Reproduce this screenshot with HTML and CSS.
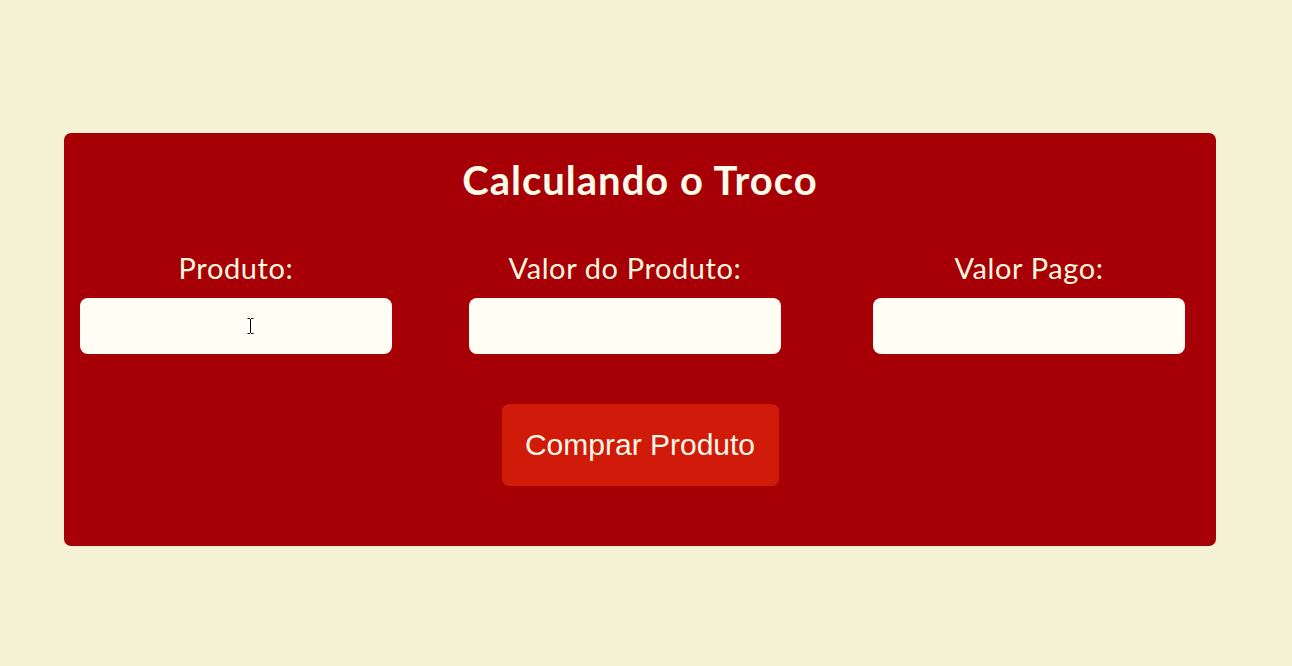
FILE: index.html
```html
<!DOCTYPE html>
<html lang="pt-BR">
<head>
<meta charset="utf-8">
<title>Calculando o Troco</title>
<link rel="stylesheet" href="styles.css">
</head>
<body>
<main class="page">
  <section class="card">
    <h1 class="title">Calculando o Troco</h1>
    <div class="fields">
      <div class="field">
        <label class="label" for="produto">Produto:</label>
        <div class="input-wrap">
          <input class="input" id="produto" type="text">
          <svg class="cursor" width="7" height="16" viewBox="0 0 7 16" aria-hidden="true">
            <path d="M0.5 0.5h2.5M4 0.5h2.5M3.5 1v14M0.5 15.5h2.5M4 15.5h2.5" stroke="#000" stroke-width="1" fill="none"/>
          </svg>
        </div>
      </div>
      <div class="field field-2">
        <label class="label" for="valor">Valor do Produto:</label>
        <input class="input" id="valor" type="text">
      </div>
      <div class="field field-3">
        <label class="label" for="pago">Valor Pago:</label>
        <input class="input" id="pago" type="text">
      </div>
    </div>
    <div class="actions">
      <button class="btn" type="button">Comprar Produto</button>
    </div>
  </section>
</main>
</body>
</html>
```
FILE: styles.css
```css
html, body {
  margin: 0;
  padding: 0;
}
body {
  background: #f5f1d4;
  font-family: Lato, "Open Sans", sans-serif;
}
.page {
  padding: 133px 76px 0 64px;
}
.card {
  box-sizing: border-box;
  width: 1152px;
  height: 413px;
  background: #a60006;
  border-radius: 7px;
  padding-top: 24px;
}
.title {
  margin: 0;
  text-align: center;
  font-size: 40px;
  letter-spacing: 1px;
  line-height: 46px;
  font-weight: 700;
  color: #fffbe8;
}
.fields {
  display: flex;
  margin-top: 49px;
  padding: 0 31px 0 16px;
}
.field {
  display: flex;
  flex-direction: column;
  align-items: center;
  width: 312px;
}
.field-2 {
  margin-left: 77px;
}
.field-3 {
  margin-left: 92px;
}
.label {
  font-size: 29px;
  letter-spacing: 0.6px;
  line-height: 32px;
  color: #fff6df;
  white-space: nowrap;
  margin-bottom: 14px;
}
.input-wrap {
  position: relative;
  width: 312px;
  height: 56px;
}
.input {
  display: block;
  box-sizing: border-box;
  width: 312px;
  height: 56px;
  border: none;
  border-radius: 8px;
  background: #fffdf4;
  outline: none;
}
.cursor {
  position: absolute;
  left: 167px;
  top: 20px;
}
.actions {
  display: flex;
  justify-content: center;
  margin-top: 50px;
}
.btn {
  width: 277px;
  height: 82px;
  border: none;
  border-radius: 7px;
  background: #d01b0a;
  color: #fff8e6;
  font-family: "Liberation Sans", Arial, sans-serif;
  font-size: 30px;
}
```
